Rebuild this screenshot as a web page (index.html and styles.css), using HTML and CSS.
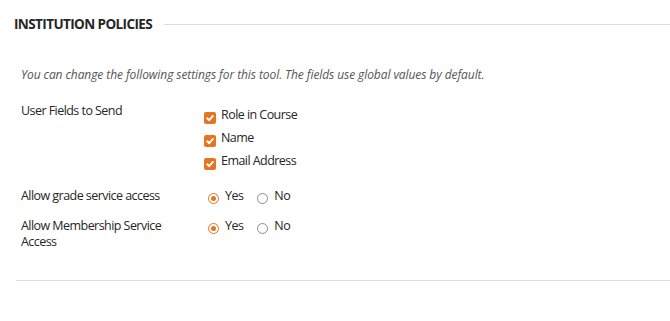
FILE: index.html
```html
<!DOCTYPE html>
<html>
<head>
<meta charset="utf-8">
<link rel="stylesheet" href="styles.css">
</head>
<body>
<section class="panel">
  <div class="heading">
    <h2 class="heading-title">INSTITUTION POLICIES</h2>
    <div class="heading-rule"></div>
  </div>
  <p class="intro">You can change the following settings for this tool. The fields use global values by default.</p>
  <div class="rows">
    <div class="row">
      <div class="label">User Fields to Send</div>
      <div class="field checks">
        <label class="check"><span class="box"><svg viewBox="0 0 12 12" width="12" height="12"><path d="M3.2 6.3 L5.2 8.2 L8.9 3.9" fill="none" stroke="#fff" stroke-width="1.9" stroke-linecap="round" stroke-linejoin="round"/></svg></span>Role in Course</label>
        <label class="check"><span class="box"><svg viewBox="0 0 12 12" width="12" height="12"><path d="M3.2 6.3 L5.2 8.2 L8.9 3.9" fill="none" stroke="#fff" stroke-width="1.9" stroke-linecap="round" stroke-linejoin="round"/></svg></span>Name</label>
        <label class="check"><span class="box"><svg viewBox="0 0 12 12" width="12" height="12"><path d="M3.2 6.3 L5.2 8.2 L8.9 3.9" fill="none" stroke="#fff" stroke-width="1.9" stroke-linecap="round" stroke-linejoin="round"/></svg></span>Email Address</label>
      </div>
    </div>
    <div class="row">
      <div class="label">Allow grade service access</div>
      <div class="field radios">
        <label class="radio"><span class="dot on"></span>Yes</label>
        <label class="radio"><span class="dot"></span>No</label>
      </div>
    </div>
    <div class="row">
      <div class="label">Allow Membership Service Access</div>
      <div class="field radios">
        <label class="radio"><span class="dot on"></span>Yes</label>
        <label class="radio"><span class="dot"></span>No</label>
      </div>
    </div>
  </div>
  <div class="bottom-rule"></div>
</section>
</body>
</html>
```

FILE: styles.css
```css
html, body {
  margin: 0;
  padding: 0;
  background: #fff;
}
body {
  font-family: "Open Sans", "Noto Sans", sans-serif;
  color: #262626;
  font-size: 12.5px;
  letter-spacing: -0.55px;
}
.panel {
  padding: 14px 0 0 14px;
}
.heading {
  display: flex;
  align-items: center;
  gap: 12px;
}
.heading-title {
  margin: 0;
  font-size: 13.5px;
  font-weight: 700;
  letter-spacing: -0.6px;
  color: #262626;
  line-height: 20px;
}
.heading-rule {
  flex: 1;
  height: 1px;
  background: #dcdcdc;
}
.intro {
  margin: 33px 0 0 7px;
  font-style: italic;
  color: #555;
  font-size: 12px;
  letter-spacing: -0.08px;
  line-height: 16px;
}
.rows {
  margin: 20px 0 0 7px;
  display: flex;
  flex-direction: column;
  gap: 14px;
}
.row {
  display: flex;
}
.label {
  width: 160px;
  line-height: 16px;
}
.field {
  margin-left: 23px;
}
.checks {
  display: flex;
  flex-direction: column;
  gap: 6px;
  padding: 4px 0 4px 0;
}
.check {
  display: flex;
  align-items: flex-start;
  line-height: 16px;
}
.box {
  width: 12px;
  height: 12px;
  border-radius: 2px;
  background: #e5761f;
  margin: 5px 5px 0 0;
  display: flex;
}
.radios {
  display: flex;
  gap: 14px;
  padding-left: 4px;
}
.radio {
  display: flex;
  align-items: flex-start;
  line-height: 16px;
}
.dot {
  width: 11px;
  height: 11px;
  border: 1px solid #8c8c8c;
  border-radius: 50%;
  margin: 5px 6px 0 0;
  box-sizing: border-box;
  position: relative;
}
.dot.on {
  border-color: #e5761f;
}
.dot.on::after {
  content: "";
  position: absolute;
  left: 2px;
  top: 2px;
  width: 5px;
  height: 5px;
  border-radius: 50%;
  background: #e5761f;
}
.bottom-rule {
  margin: 30px 0 0 2px;
  height: 1px;
  background: #dcdcdc;
}
```
